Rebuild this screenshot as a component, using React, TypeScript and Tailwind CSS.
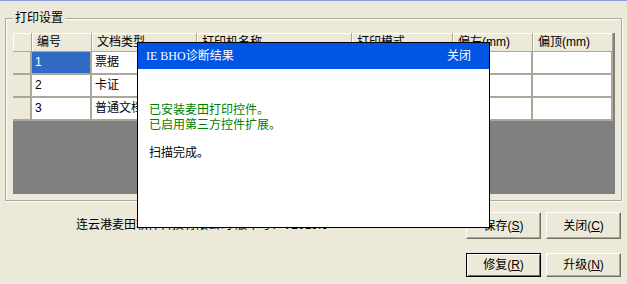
import React from 'react';

const font = { fontFamily: '"Liberation Sans", "Noto Sans CJK SC", sans-serif' };

const columns = [
  { key: 'hdr', label: '', width: 'w-[19px]' },
  { key: 'no', label: '编号', width: 'w-[60px]' },
  { key: 'type', label: '文档类型', width: 'w-[105px]' },
  { key: 'printer', label: '打印机名称', width: 'w-[155px]' },
  { key: 'mode', label: '打印模式', width: 'w-[101px]' },
  { key: 'left', label: '偏左(mm)', width: 'w-[80px]' },
  { key: 'top', label: '偏顶(mm)', width: 'w-[80px]' },
];

const rows = [
  { no: '1', type: '票据' },
  { no: '2', type: '卡证' },
  { no: '3', type: '普通文档' },
];

const XpButton = ({
  label,
  hotkey,
  isDefault = false,
  h = 'h-[27px]',
}: {
  label: string;
  hotkey: string;
  isDefault?: boolean;
  h?: string;
}) => (
  <button
    className={`w-[75px] ${h} bg-[#ECE9D8] text-[12px] text-black flex items-center justify-center ${
      isDefault
        ? 'border border-black shadow-[inset_1px_1px_0_#fff,inset_-1px_-1px_0_#716F64]'
        : 'border border-t-white border-l-white border-b-[#716F64] border-r-[#716F64] shadow-[inset_-1px_-1px_0_#ACA899]'
    }`}
  >
    {label}(<span className="underline">{hotkey}</span>)
  </button>
);

export default function App() {
  return (
    <div
      className="relative w-[627px] h-[284px] overflow-hidden bg-[#ECE9D8] border-t border-[#8A9DE0] text-[12px] text-black"
      style={font}
    >
      {/* group box */}
      <div className="relative mt-[17px] ml-[5px] w-[617px] h-[183px] border border-[#ACA899] shadow-[inset_1px_1px_0_#fff,1px_1px_0_#fff]">
        <span className="absolute -top-[9px] left-[7px] px-[2px] bg-[#ECE9D8] leading-[16px]">打印设置</span>

        <div className="mt-[14px] ml-[7px] w-[602px] h-[161px] bg-[#808080]">
          <div className="flex h-[19px] w-[600px] bg-[#ECE9D8] border-b border-[#ACA899]">
            {columns.map((c) => (
              <div
                key={c.key}
                className={`${c.width} h-full shrink-0 border-r border-[#ACA899] shadow-[inset_1px_1px_0_#fff] pl-[5px] leading-[18px] whitespace-nowrap overflow-hidden`}
              >
                {c.label}
              </div>
            ))}
          </div>
          {rows.map((r, i) => (
            <div key={r.no} className="flex h-[23px] w-[600px] bg-white border-b-2 border-[#ACA899]">
              {columns.map((c) => {
                const selected = i === 0 && c.key === 'no';
                let text = '';
                if (c.key === 'no') text = r.no;
                if (c.key === 'type') text = r.type;
                return (
                  <div
                    key={c.key}
                    className={`${c.width} h-full shrink-0 border-r-2 border-[#ACA899] pl-[3px] leading-[21px] whitespace-nowrap overflow-hidden ${
                      c.key === 'hdr' ? 'bg-[#ECE9D8]' : selected ? 'bg-[#316AC5] text-white' : ''
                    }`}
                  >
                    {text}
                  </div>
                );
              })}
            </div>
          ))}
        </div>
      </div>

      {/* bottom bar */}
      <div className="flex justify-between mt-[11px] pl-[76px] pr-[6px]">
        <div className="mt-[5px] leading-[16px]">连云港麦田软件科技有限公司 版本号：V2019.6</div>
        <div className="grid grid-cols-2 gap-x-[5px] gap-y-[14px]">
          <XpButton label="保存" hotkey="S" />
          <XpButton label="关闭" hotkey="C" />
          <XpButton label="修复" hotkey="R" isDefault h="h-[24px]" />
          <XpButton label="升级" hotkey="N" h="h-[24px]" />
        </div>
      </div>

      {/* diagnostic popup */}
      <div className="absolute left-[137px] top-[41px] w-[353px] h-[186px] bg-white border border-black flex flex-col">
        <div className="h-[26px] bg-[#0055E5] text-white flex items-center justify-between pl-[8px] pr-[18px] shrink-0">
          <span className="font-['Liberation_Serif','Noto_Sans_CJK_SC',serif]">IE BHO诊断结果</span>
          <span>关闭</span>
        </div>
        <div className="pt-[34px] pl-[11px] leading-[15px]">
          <div className="text-[#008000]">已安装麦田打印控件。</div>
          <div className="text-[#008000]">已启用第三方控件扩展。</div>
          <div className="h-[13px]" />
          <div>扫描完成。</div>
        </div>
      </div>
    </div>
  );
}
